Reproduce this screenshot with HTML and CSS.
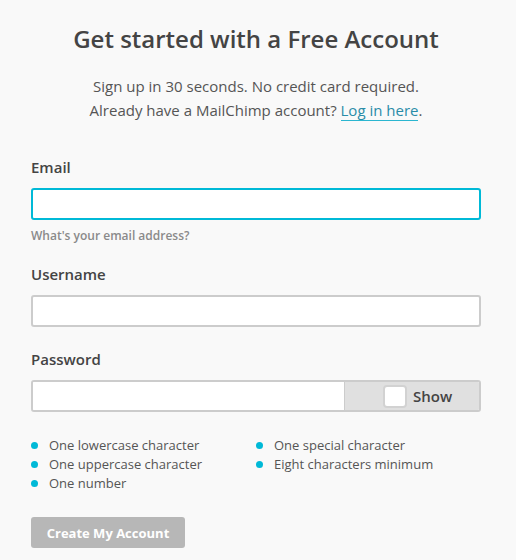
FILE: index.html
```html
<!DOCTYPE html>
<html lang="en">

<head>
    <meta charset="UTF-8">
    <meta name="viewport" content="width=device-width, initial-scale=1.0">
    <title>Sign up</title>
    <link rel="stylesheet" href="styles.css">
</head>

<body>
    <div id="signup">
        <h1 class="title">Get started with a Free Account</h1>
        <p class="intro">
            Sign up in 30 seconds. No credit card required.<br>
            Already have a MailChimp account? <a href="#" class="login">Log in here</a>.
        </p>

        <div class="field field-email">
            <label class="label" for="email">Email</label>
            <input class="textbox focused" type="email" id="email">
            <p class="hint">What's your email address?</p>
        </div>

        <div class="field field-user">
            <label class="label" for="username">Username</label>
            <input class="textbox" type="text" id="username">
        </div>

        <div class="field field-pass">
            <label class="label" for="password">Password</label>
            <div class="passbox">
                <input class="passinput" type="password" id="password">
                <label class="show">
                    <span class="check"></span>
                    Show
                </label>
            </div>
        </div>

        <ul class="rules">
            <li>One lowercase character</li>
            <li>One special character</li>
            <li>One uppercase character</li>
            <li>Eight characters minimum</li>
            <li>One number</li>
        </ul>

        <button class="submit" disabled>Create My Account</button>
    </div>
</body>

</html>
```

FILE: styles.css
```css
body {
    margin: 0;
    background-color: #f9f9f9;
    font-family: "Open Sans", "Liberation Sans", sans-serif;
    color: #444444;
}

#signup {
    width: 450px;
    padding: 24px 35px 0 31px;
}

.title {
    margin: 0;
    font-size: 24px;
    line-height: 30px;
    font-weight: 600;
    text-align: center;
    color: #444444;
}

.intro {
    margin: 20px 0 0;
    font-size: 15px;
    line-height: 24px;
    text-align: center;
    color: #555555;
}

.login {
    color: #2a8ca8;
    text-decoration: none;
    border-bottom: 1px solid #2bb6d0;
}

.field {
    display: flex;
    flex-direction: column;
}

.field-email {
    margin-top: 35px;
}

.field-user {
    margin-top: 20px;
}

.field-pass {
    margin-top: 22px;
}

.label {
    font-size: 15px;
    line-height: 20px;
    font-weight: 600;
    color: #444444;
    margin-bottom: 11px;
}

.textbox {
    box-sizing: border-box;
    height: 32px;
    margin: 0;
    border: 2px solid #cccccc;
    border-radius: 3px;
    background-color: #ffffff;
    outline: none;
}

.textbox.focused {
    border-color: #00b9d7;
}

.hint {
    margin: 8px 0 0;
    font-size: 12px;
    line-height: 16px;
    font-weight: 600;
    color: #8a8a8a;
}

.passbox {
    display: flex;
    box-sizing: border-box;
    height: 32px;
    border: 2px solid #cccccc;
    border-radius: 3px;
    overflow: hidden;
}

.passinput {
    flex: 1;
    margin: 0;
    border: none;
    background-color: #ffffff;
    outline: none;
}

.show {
    display: flex;
    align-items: center;
    gap: 6px;
    width: 135px;
    box-sizing: border-box;
    padding-left: 38px;
    border-left: 1px solid #cccccc;
    background-color: #e0e0e0;
    font-size: 15px;
    font-weight: 600;
    color: #444444;
}

.check {
    box-sizing: border-box;
    width: 24px;
    height: 23px;
    border: 2px solid #d2d2d2;
    border-radius: 4px;
    background-color: #ffffff;
}

.rules {
    display: grid;
    grid-template-columns: 225px 225px;
    margin: 24px 0 0;
    padding: 0;
    list-style: none;
}

.rules li {
    position: relative;
    padding-left: 18px;
    font-size: 13px;
    line-height: 19px;
    color: #555555;
}

.rules li::before {
    content: "";
    position: absolute;
    left: 0;
    top: 6px;
    width: 7px;
    height: 7px;
    border-radius: 50%;
    background-color: #00b9d7;
}

.submit {
    display: block;
    margin-top: 24px;
    width: 154px;
    height: 31px;
    padding: 0;
    border: none;
    border-radius: 3px;
    background-color: #b7b7b7;
    color: #ffffff;
    font-family: "Open Sans", "Liberation Sans", sans-serif;
    font-size: 13px;
    font-weight: 700;
}
```
